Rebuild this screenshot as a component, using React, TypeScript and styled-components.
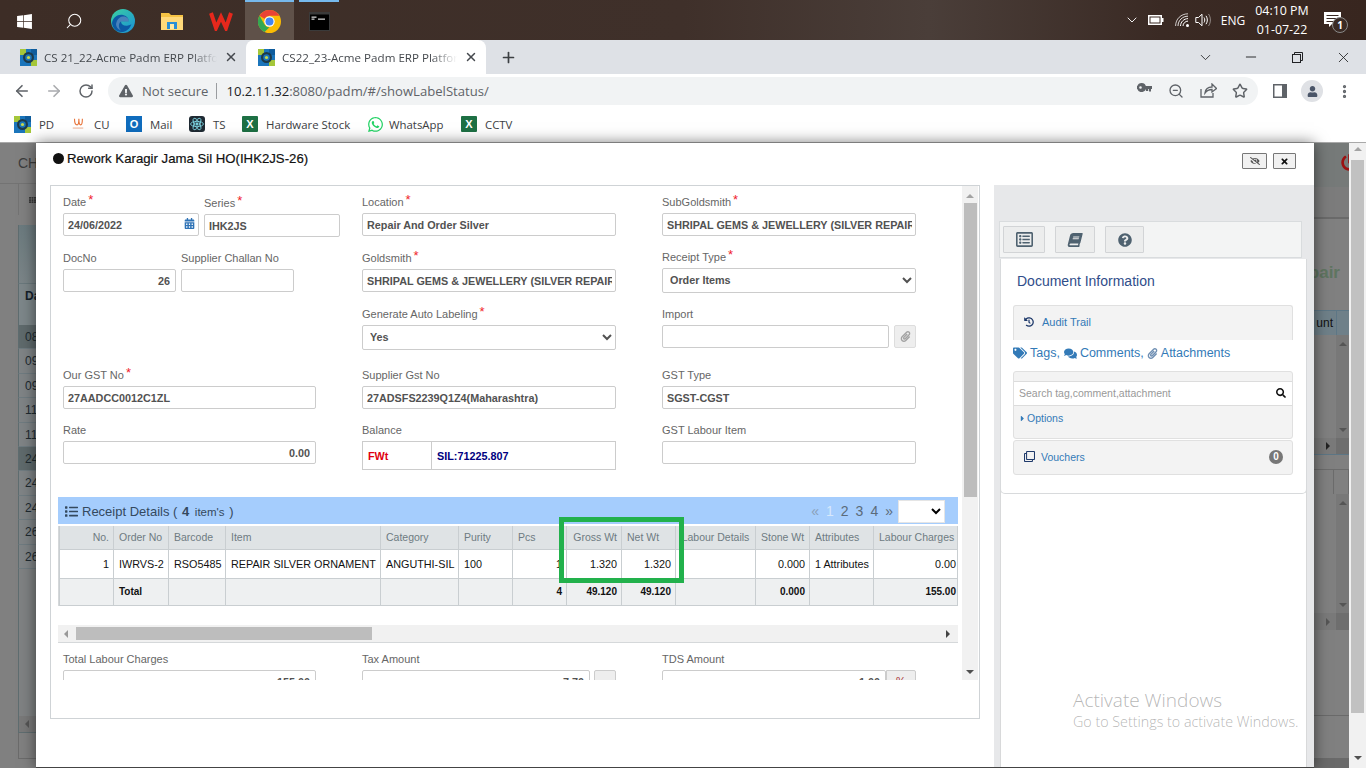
import React from "react";
import styled, { createGlobalStyle } from "styled-components";
import {
  ArrowLeft,
  ArrowRight,
  RotateCw,
  Search as SearchIcon,
  ZoomOut,
  Star,
  EllipsisVertical,
  X,
  Plus,
  ChevronDown,
  Minus,
} from "lucide-react";
import {
  FaWindows,
  FaUser,
  FaExclamationTriangle,
  FaCalendarAlt,
  FaPaperclip,
  FaList,
  FaRegListAlt,
  FaBook,
  FaQuestionCircle,
  FaHistory,
  FaTags,
  FaComments,
  FaSearch,
  FaCaretRight,
  FaEyeSlash,
  FaTimes,
  FaPowerOff,
  FaWhatsapp,
  FaRegClone,
  FaTh,
} from "react-icons/fa";

const GlobalStyle = createGlobalStyle`
  html, body {
    margin: 0;
    padding: 0;
    overflow: hidden;
    background: #808080;
  }
  * { box-sizing: border-box; }
`;

const UI_FONT = `"Open Sans", "Noto Sans", sans-serif`;
const WEB_FONT = `"Liberation Sans", Arial, sans-serif`;

const Screen = styled.div`
  width: 1366px;
  height: 768px;
  display: flex;
  flex-direction: column;
  overflow: hidden;
  font-family: ${WEB_FONT};
  position: relative;
`;

/* ---------- windows taskbar ---------- */

const Taskbar = styled.div`
  height: 40px;
  flex: none;
  display: flex;
  align-items: stretch;
  background: linear-gradient(90deg, #3d2d26 0%, #3f302a 50%, #4a3e39 68%, #3a2a24 85%, #38261f 100%);
  color: #fff;
  font-family: ${UI_FONT};
`;

const TaskCell = styled.div<{ $active?: boolean }>`
  width: 49px;
  display: flex;
  align-items: center;
  justify-content: center;
  background: ${(p) => (p.$active ? "#5f5149" : "transparent")};
  border-top: 2px solid ${(p) => (p.$active ? "#76b9ed" : "transparent")};
`;

const TaskCellOpen = styled(TaskCell)`
  width: 40px;
  margin-left: 5px;
  border-top-color: #76b9ed;
`;

const Tray = styled.div`
  margin-left: auto;
  display: flex;
  align-items: center;
  padding-right: 17px;
`;

const TrayIcon = styled.div<{ $w: number }>`
  width: ${(p) => p.$w}px;
  display: flex;
  align-items: center;
  justify-content: center;
`;

const TrayLang = styled.div`
  width: 38px;
  margin-left: 1px;
  font-size: 12px;
  text-align: center;
`;

const Clock = styled.div`
  width: 60px;
  text-align: center;
  font-size: 12.4px;
  line-height: 19px;
`;

const Notify = styled.div`
  width: 34px;
  margin-left: 3px;
  position: relative;
  display: flex;
  justify-content: center;
`;

const NotifyBadge = styled.span`
  position: absolute;
  left: 17px;
  top: 5px;
  width: 16px;
  height: 16px;
  border-radius: 50%;
  background: #3a2a24;
  border: 1px solid #8a8a8a;
  font-size: 10px;
  line-height: 14px;
  font-weight: 700;
  text-align: center;
`;

/* ---------- chrome ---------- */

const TabStrip = styled.div`
  height: 34px;
  flex: none;
  background: #dee1e6;
  display: flex;
  align-items: flex-end;
  padding-left: 8px;
  font-family: ${UI_FONT};
`;

const Tab = styled.div<{ $active?: boolean }>`
  width: ${(p) => (p.$active ? 240 : 238)}px;
  height: 34px;
  display: flex;
  align-items: center;
  padding: 0 8px 0 12px;
  gap: 7px;
  border-radius: 8px 8px 0 0;
  background: ${(p) => (p.$active ? "#fff" : "transparent")};
  color: #45494e;
  font-size: 11.6px;
`;

const TabTitle = styled.span`
  flex: 1;
  white-space: nowrap;
  overflow: hidden;
  -webkit-mask-image: linear-gradient(90deg, #000 85%, transparent 100%);
  mask-image: linear-gradient(90deg, #000 85%, transparent 100%);
`;

const NewTab = styled.div`
  width: 28px;
  height: 34px;
  margin-left: 8px;
  display: flex;
  align-items: center;
  justify-content: center;
  color: #3c4043;
`;

const WindowControls = styled.div`
  margin-left: auto;
  height: 34px;
  display: flex;
  align-items: center;
  color: #202124;
`;

const WindowButton = styled.div`
  width: 46px;
  display: flex;
  justify-content: center;
`;

const Toolbar = styled.div`
  height: 34px;
  flex: none;
  background: #fff;
  display: flex;
  align-items: center;
  font-family: ${UI_FONT};
  padding-left: 6px;
`;

const NavButton = styled.div<{ $dim?: boolean }>`
  width: 32px;
  display: flex;
  justify-content: center;
  color: ${(p) => (p.$dim ? "#a9abae" : "#5f6368")};
`;

const Omnibox = styled.div`
  width: 1150px;
  height: 28px;
  margin-left: 6px;
  border-radius: 14px;
  background: #f1f3f4;
  display: flex;
  align-items: center;
  padding-left: 11px;
  font-size: 13.1px;
  color: #5f6368;
`;

const NotSecure = styled.span`
  margin-left: 9px;
  padding-right: 8px;
  border-right: 1px solid #9a9da0;
  line-height: 16px;
`;

const Url = styled.span`
  margin-left: 9px;
  color: #5f6368;
  b {
    font-weight: 400;
    color: #202124;
  }
`;

const OmniActions = styled.div`
  margin-left: auto;
  padding-right: 2px;
  display: flex;
  color: #5f6368;
`;

const OmniAction = styled.div`
  width: 32px;
  display: flex;
  justify-content: center;
`;

const ToolEnd = styled.div`
  margin-left: 6px;
  display: flex;
  align-items: center;
  color: #5f6368;
`;

const ToolEndItem = styled.div`
  width: 32px;
  display: flex;
  justify-content: center;
`;

const Avatar = styled.div`
  width: 22px;
  height: 22px;
  border-radius: 50%;
  background: #dfe1e5;
  color: #4a5568;
  display: flex;
  align-items: center;
  justify-content: center;
`;

const Bookmarks = styled.div`
  height: 35px;
  flex: none;
  background: #fff;
  border-bottom: 1px solid #a9a9a9;
  display: flex;
  align-items: center;
  padding: 0 0 2px 14px;
  font-family: ${UI_FONT};
  font-size: 11.4px;
  color: #3c4043;
`;

const Bookmark = styled.div<{ $w: number; $gap?: number }>`
  width: ${(p) => p.$w}px;
  display: flex;
  align-items: center;
  gap: ${(p) => p.$gap ?? 8}px;
`;

const ExcelMark = styled.span`
  width: 16px;
  height: 16px;
  background: #1d7044;
  color: #fff;
  font-size: 11px;
  font-weight: 700;
  line-height: 16px;
  text-align: center;
  font-family: ${WEB_FONT};
  border-radius: 1px;
`;

const OutlookMark = styled.span`
  width: 16px;
  height: 16px;
  background: #0f6cbd;
  color: #fff;
  font-size: 11px;
  font-weight: 700;
  line-height: 16px;
  text-align: center;
  font-family: ${WEB_FONT};
`;

const ReactMark = styled.span`
  width: 16px;
  height: 16px;
  background: #1f2a33;
  border-radius: 3px;
  display: flex;
  align-items: center;
  justify-content: center;
`;

/* ---------- dimmed page behind the modal ---------- */

const PageArea = styled.div`
  flex: 1;
  position: relative;
  display: flex;
  min-height: 0;
  background: #808080;
`;

const BackPage = styled.div`
  width: 1349px;
  display: flex;
  justify-content: space-between;
  overflow: hidden;
`;

const BackLeft = styled.div`
  width: 36px;
  display: flex;
  flex-direction: column;
  color: #333;
`;

const BackHead = styled.div`
  height: 41px;
  flex: none;
  padding-left: 18px;
  line-height: 40px;
  font-size: 14px;
  color: #3c3c3c;
  border-bottom: 1px solid #737373;
  white-space: nowrap;
  overflow: hidden;
`;

const BackTools = styled.div`
  height: 31px;
  flex: none;
  margin-left: 18px;
  padding-left: 10px;
  border-left: 1px solid #737373;
  display: flex;
  align-items: center;
  color: #3a3a3a;
`;

const BackPanel = styled.div`
  margin: 10px 0 0 18px;
  flex: 1;
  display: flex;
  flex-direction: column;
`;

const BackPanelHead = styled.div`
  height: 58px;
  flex: none;
  background: linear-gradient(#6b7a7e, #7b8588);
  border-left: 1px solid #5f6d70;
`;

const BackHeadCell = styled.div`
  height: 42px;
  flex: none;
  padding: 5px 0 0 6px;
  background: #7d878a;
  border-left: 1px solid #5f6d70;
  border-top: 1px solid #6a787c;
  font-size: 12px;
  font-weight: 700;
  color: #14202a;
`;

const BackRow = styled.div<{ $dark?: boolean }>`
  height: 24.4px;
  flex: none;
  padding-left: 6px;
  line-height: 24px;
  font-size: 12px;
  overflow: hidden;
  background: ${(p) => (p.$dark ? "#5f6a6c" : "#7f8486")};
  color: #1e2a30;
  border-left: 1px solid #5f6d70;
  border-bottom: 1px solid #6f7b80;
`;

const BackFill = styled.div`
  flex: 1;
  border-left: 1px solid #5f6d70;
  background: #7f8283;
`;

const BackHScroll = styled.div`
  height: 17px;
  flex: none;
  background: #797979;
  border-left: 1px solid #5f6d70;
  border-bottom: 1px solid #5f6d70;
  display: flex;
  align-items: center;
  padding-left: 6px;
`;

const BackFoot = styled.div`
  height: 26px;
  flex: none;
  border-left: 1px solid #6b6b6b;
  border-bottom: 1px solid #6b6b6b;
  margin-bottom: 9px;
`;

const BackRight = styled.div`
  width: 35px;
  display: flex;
  flex-direction: column;
`;

const BackRightHead = styled.div`
  height: 44px;
  flex: none;
  display: flex;
  justify-content: flex-end;
  padding-top: 11px;
  overflow: hidden;
  background: #767a79;
`;

const BackRightBar = styled.div`
  height: 32px;
  flex: none;
  background: #7c7c7c;
  border-bottom: 2px solid #6a6a6a;
`;

const BackTitle = styled.div`
  height: 91px;
  flex: none;
  display: flex;
  justify-content: flex-end;
  padding-right: 9px;
  padding-top: 42px;
  font-size: 17px;
  font-weight: 700;
  line-height: 24px;
  color: #5f7561;
`;

const BackTableHead = styled.div`
  height: 25px;
  flex: none;
  display: flex;
  background: #6f8089;
  border-top: 1px solid #5d7685;
  font-size: 12px;
  color: #111;
`;

const BackThA = styled.div`
  width: 23px;
  padding-right: 3px;
  text-align: right;
  line-height: 24px;
  border-right: 1px solid #5d7685;
  overflow: hidden;
`;

const BackInnerBody = styled.div<{ $h: number }>`
  height: ${(p) => p.$h}px;
  flex: none;
  display: flex;
  justify-content: flex-end;
`;

const BackInnerBar = styled.div`
  width: 13px;
  background: #787878;
  display: flex;
  flex-direction: column;
  justify-content: space-between;
  align-items: center;
  padding: 7px 0 6px;
`;

const BackInnerFoot = styled.div<{ $line?: boolean }>`
  height: 17px;
  flex: none;
  display: flex;
  align-items: center;
  background: #7a7a7a;
  border-bottom: ${(p) => (p.$line ? "1px solid #5d7685" : "none")};
`;

const BackFootEnd = styled.div`
  margin-left: auto;
  width: 13px;
  height: 100%;
  background: #6e6e6e;
`;

const BackFootArrow = styled.div`
  margin-left: 12px;
`;

const BackGap = styled.div<{ $h: number }>`
  height: ${(p) => p.$h}px;
  flex: none;
`;

const BackGridRow = styled.div<{ $h: number }>`
  height: ${(p) => p.$h}px;
  flex: none;
  display: flex;
  border-top: 1px solid #6c6c6c;
`;

const BackGridCell = styled.div<{ $w: number }>`
  width: ${(p) => p.$w}px;
  border-right: 1px solid #6c6c6c;
`;

const BackEnd = styled.div`
  flex: 1;
  border-top: 1px solid #6a6a6a;
  display: flex;
  flex-direction: column;
  justify-content: flex-end;
`;

const BackEndBar = styled.div`
  height: 10px;
  background: #6a6a6a;
`;

const Arrow = styled.span<{ $dir: "up" | "down" | "left" | "right"; $c?: string; $s?: number }>`
  display: block;
  width: 0;
  height: 0;
  flex: none;
  ${(p) => {
    const c = p.$c ?? "#505050";
    const s = p.$s ?? 4;
    if (p.$dir === "up") return `border-left:${s}px solid transparent;border-right:${s}px solid transparent;border-bottom:${s}px solid ${c};`;
    if (p.$dir === "down") return `border-left:${s}px solid transparent;border-right:${s}px solid transparent;border-top:${s}px solid ${c};`;
    if (p.$dir === "left") return `border-top:${s}px solid transparent;border-bottom:${s}px solid transparent;border-right:${s}px solid ${c};`;
    return `border-top:${s}px solid transparent;border-bottom:${s}px solid transparent;border-left:${s}px solid ${c};`;
  }}
`;

const PageScroll = styled.div`
  width: 17px;
  background: #f1f1f1;
  display: flex;
  flex-direction: column;
  align-items: center;
  padding: 4px 0 8px;
`;

const PageThumb = styled.div`
  width: 13px;
  height: 553px;
  margin: 9px 0 auto;
  background: #c1c1c1;
`;

/* ---------- modal ---------- */

const Modal = styled.div`
  position: absolute;
  left: 36px;
  top: 0;
  bottom: 0;
  width: 1278px;
  background: #fff;
  box-shadow: 0 0 14px rgba(0, 0, 0, 0.55);
  border-bottom: 1px solid #444;
  display: flex;
  flex-direction: column;
`;

const ModalHead = styled.div`
  height: 42px;
  flex: none;
  display: flex;
  align-items: flex-start;
  padding: 7px 18px 0 17px;
`;

const ModalTitle = styled.div`
  display: flex;
  align-items: center;
  height: 16px;
  gap: 3px;
  font-size: 13.2px;
  -webkit-text-stroke: 0.2px #111;
  color: #111;
`;

const TitleDot = styled.span`
  width: 11px;
  height: 11px;
  border-radius: 50%;
  background: #111;
`;

const ModalButtons = styled.div`
  margin-left: auto;
  display: flex;
  gap: 6px;
  padding-top: 3px;
`;

const ModalButton = styled.div<{ $w: number }>`
  width: ${(p) => p.$w}px;
  height: 16px;
  background: #f1f1f1;
  border: 1px solid #777;
  border-radius: 1px;
  display: flex;
  align-items: center;
  justify-content: center;
  color: #111;
`;

const ModalBody = styled.div`
  flex: 1;
  min-height: 0;
  display: flex;
  padding-left: 14px;
  gap: 14px;
`;

const FormPanel = styled.div`
  width: 930px;
  height: 534px;
  border: 1px solid #cfd3d6;
`;

const FormViewport = styled.div`
  height: 494px;
  display: flex;
  overflow: hidden;
`;

const FormContent = styled.div`
  flex: 1;
  min-width: 0;
  padding: 8px 0 0 12px;
  overflow: hidden;
`;

const FormScrollBar = styled.div`
  width: 16px;
  margin-right: 1px;
  background: #f1f1f1;
  display: flex;
  flex-direction: column;
  align-items: center;
  padding: 8px 0 6px;
`;

const FormThumb = styled.div`
  width: 13px;
  height: 294px;
  margin: 5px 0 auto;
  background: #bdbdbd;
`;

const FormRow = styled.div<{ $h: number }>`
  height: ${(p) => p.$h}px;
  display: grid;
  grid-template-columns: 253px 254px 254px;
  column-gap: 46px;
`;

const PairCell = styled.div`
  display: flex;
  gap: 5px;
`;

const Field = styled.div<{ $w?: number; $nudge?: number }>`
  ${(p) => (p.$w ? `width: ${p.$w}px; flex: none;` : "")}
  ${(p) => (p.$nudge ? `margin-top: ${p.$nudge}px;` : "")}
`;

const Label = styled.div`
  height: 19px;
  line-height: 16px;
  font-size: 11px;
  color: #666;
  white-space: nowrap;
`;

const Req = styled.span`
  color: #f01e2c;
  font-size: 13px;
  line-height: 10px;
  margin-left: 2px;
  position: relative;
  top: -2px;
`;

const InputBox = styled.input<{ $right?: boolean }>`
  display: block;
  width: 100%;
  height: 23px;
  border: 1px solid #ccc;
  border-radius: 2px;
  background: #fff;
  padding: 0 ${(p) => (p.$right ? 5 : 3)}px 0 4px;
  font-family: ${WEB_FONT};
  font-size: 10.8px;
  font-weight: 700;
  color: #525252;
  text-align: ${(p) => (p.$right ? "right" : "left")};
  outline: none;
`;

const SelectBox = styled.select`
  display: block;
  width: 100%;
  height: 25px;
  border: 1px solid #ccc;
  border-radius: 2px;
  background: #fff;
  padding: 0 0 1px 3px;
  font-family: ${WEB_FONT};
  font-size: 10.8px;
  font-weight: 700;
  color: #525252;
  outline: none;
`;

const InputWrap = styled.div`
  position: relative;
  display: flex;
  gap: 4px;
`;

const CalIcon = styled.span`
  position: absolute;
  right: 4px;
  top: 5px;
  color: #2f73b6;
  display: flex;
`;

const AttachButton = styled.div`
  width: 22px;
  height: 23px;
  flex: none;
  margin-left: 1px;
  background: #eee;
  border: 1px solid #ddd;
  border-radius: 2px;
  color: #a3a3a3;
  display: flex;
  align-items: center;
  justify-content: center;
`;

const AddonButton = styled.div`
  width: 22px;
  height: 23px;
  flex: none;
  background: #eee;
  border: 1px solid #ccc;
  border-radius: 2px;
`;

const PercentButton = styled.div`
  width: 30px;
  height: 23px;
  flex: none;
  margin-left: -4px;
  background: #eee;
  border: 1px solid #ccc;
  border-radius: 0 2px 2px 0;
  color: #a33;
  font-size: 11px;
  text-align: center;
  line-height: 21px;
`;

const BalanceBox = styled.div`
  height: 29px;
  display: flex;
  border: 1px solid #ccc;
  font-size: 10.8px;
  font-weight: 700;
  line-height: 28px;
`;

const BalanceKey = styled.div`
  width: 69px;
  padding-left: 5px;
  border-right: 1px solid #ccc;
  color: #e0000f;
`;

const BalanceValue = styled.div`
  padding-left: 5px;
  color: #000080;
`;

/* receipt grid */

const GridSection = styled.div`
  margin: 27px 0 0 -5px;
  width: 900px;
  position: relative;
`;

const GridHead = styled.div`
  height: 27px;
  background: #a5cdfd;
  display: flex;
  align-items: center;
  padding: 1px 0 0 7px;
  color: #34495e;
  font-size: 13px;
`;

const GridHeadTitle = styled.span`
  margin-left: 4px;
  b {
    font-size: 13px;
    margin: 0 1px;
  }
  small {
    font-size: 11.5px;
    margin: 0 1px;
  }
`;

const Pager = styled.div`
  margin-left: auto;
  padding-right: 13px;
  display: flex;
  align-items: center;
  font-size: 14px;
  color: #5b6b7a;
`;

const PagerNum = styled.span<{ $on?: boolean; $dim?: boolean }>`
  margin-right: 7px;
  color: ${(p) => (p.$on ? "#d7e8fc" : p.$dim ? "#8aa0b8" : "#5b6b7a")};
`;

const PagerSelect = styled.select`
  width: 47px;
  height: 23px;
  margin-left: -2px;
  background: #fff;
  border: 1px solid #e5e5e5;
  outline: none;
`;

const GridScroll = styled.div`
  margin-top: 2px;
  overflow: hidden;
  height: 80px;
  border-left: 1px solid #d5d8da;
`;

const GridTable = styled.table`
  table-layout: fixed;
  border-collapse: collapse;
  width: 898px;
  font-size: 10.5px;
`;

const Th = styled.th`
  height: 23px;
  background: #dfe3e5;
  border: 1px solid #c9ced1;
  border-top: none;
  padding: 0 0 0 5px;
  font-weight: 400;
  color: #6e7b82;
  text-align: left;
  white-space: nowrap;
  overflow: hidden;
`;

const ThNum = styled(Th)`
  text-align: right;
  padding: 0 4px 0 0;
`;

const ThMid = styled(Th)`
  text-align: center;
  padding: 0;
`;

const Td = styled.td<{ $right?: boolean }>`
  height: 29px;
  border: 1px solid #c9ced1;
  padding: 0 ${(p) => (p.$right ? "4px" : "0")} 0 ${(p) => (p.$right ? "0" : "5px")};
  font-size: 10.8px;
  color: #111;
  text-align: ${(p) => (p.$right ? "right" : "left")};
  white-space: nowrap;
  overflow: hidden;
  background: #fff;
  &:last-child {
    padding-right: 1px;
  }
`;

const TotalTd = styled(Td)`
  height: 27px;
  background: #eef0f1;
  font-weight: 700;
  font-size: 10px;
`;

const GridBlank = styled.div`
  height: 19px;
`;

const HScroll = styled.div`
  height: 18px;
  width: 900px;
  background: #f1f1f1;
  border-bottom: 1px solid #d5d8da;
  display: flex;
  align-items: center;
  padding: 0 8px 0 6px;
`;

const HThumb = styled.div`
  width: 296px;
  height: 13px;
  margin: 0 auto 0 8px;
  background: #bdbdbd;
`;

const Highlight = styled.div`
  position: absolute;
  left: 501px;
  top: 20px;
  width: 125px;
  height: 66px;
  border: 5px solid #22b14c;
  pointer-events: none;
`;

const BottomRow = styled(FormRow)`
  margin-top: 8px;
`;

/* right side panel */

const SidePanel = styled.div`
  width: 320px;
  height: 100%;
  background: #e7e8ea;
  padding: 36px 7px 0 5px;
  display: flex;
  flex-direction: column;
`;

const SideTools = styled.div`
  width: 303px;
  height: 37px;
  flex: none;
  background: #f3f4f4;
  border: 1px solid #d9dcde;
  padding: 4px 3px;
  display: flex;
  gap: 10px;
`;

const SideTool = styled.div<{ $w: number }>`
  width: ${(p) => p.$w}px;
  height: 27px;
  background: #eceded;
  border: 1px solid #d2d4d6;
  border-radius: 1px;
  color: #4f6270;
  display: flex;
  align-items: center;
  justify-content: center;
`;

const SlantedIcon = styled.span`
  display: flex;
  transform: skewX(-14deg);
`;

const SideBody = styled.div`
  flex: 1;
  margin: 1px 0 0 1px;
  background: #fff;
  border-left: 1px solid #d8d9da;
  border-right: 1px solid #d8d9da;
`;

const InfoCard = styled.div`
  height: 235px;
  border: 1px solid #d8dadc;
  border-top: none;
  border-radius: 0 0 5px 5px;
  padding: 14px 13px 0 12px;
  margin: 0 -1px;
`;

const InfoTitle = styled.div`
  padding-left: 4px;
  height: 32px;
  font-size: 14px;
  line-height: 17px;
  color: #2f4d8a;
`;

const AuditBox = styled.div`
  height: 35px;
  background: #f3f3f3;
  border: 1px solid #e0e0e0;
  border-bottom: none;
  border-radius: 3px 3px 0 0;
  display: flex;
  align-items: center;
  padding: 0 0 2px 10px;
  gap: 8px;
  font-size: 11px;
  color: #337ab7;
`;

const AuditIcon = styled.span`
  display: flex;
  color: #1f3a6b;
`;

const TagsLine = styled.div`
  height: 26px;
  margin-bottom: 5px;
  display: flex;
  align-items: center;
  gap: 2px;
  font-size: 12.5px;
  color: #337ab7;
`;

const TagPart = styled.span<{ $gap?: number }>`
  display: inline-flex;
  align-items: center;
  gap: 3px;
  margin-left: ${(p) => p.$gap ?? 0}px;
`;

const SearchBox = styled.div`
  height: 68px;
  background: #f3f3f3;
  border: 1px solid #e0e0e0;
  border-radius: 3px;
  padding-top: 9px;
`;

const SearchRow = styled.div`
  height: 25px;
  background: #fff;
  border-top: 1px solid #dcdcdc;
  border-bottom: 1px solid #dcdcdc;
  display: flex;
  align-items: center;
  padding: 0 6px 2px 5px;
  color: #111;
`;

const SearchInput = styled.input`
  flex: 1;
  border: none;
  outline: none;
  min-width: 0;
  padding: 0;
  font-family: ${WEB_FONT};
  font-size: 10.5px;
  background: transparent;
  &::placeholder {
    color: #999;
    opacity: 1;
  }
`;

const OptionsLink = styled.div`
  display: flex;
  align-items: center;
  gap: 0;
  padding: 6px 0 0 4px;
  font-size: 10.5px;
  color: #337ab7;
`;

const VoucherBox = styled.div`
  height: 35px;
  margin-top: 1px;
  background: #f3f3f3;
  border: 1px solid #e0e0e0;
  border-radius: 3px;
  display: flex;
  align-items: center;
  padding: 0 9px 2px 10px;
  gap: 6px;
  font-size: 10.5px;
  color: #337ab7;
`;

const VoucherIcon = styled.span`
  display: flex;
  color: #1f3a6b;
`;

const Badge = styled.span`
  margin-left: auto;
  width: 14px;
  height: 14px;
  border-radius: 50%;
  background: #777;
  color: #fff;
  font-size: 10px;
  font-weight: 700;
  line-height: 14px;
  text-align: center;
`;

const Watermark = styled.div`
  position: absolute;
  left: 1073px;
  top: 687px;
  font-family: ${UI_FONT};
  font-weight: 300;
  color: rgba(120, 120, 120, 0.55);
  pointer-events: none;
  white-space: nowrap;
`;

const WatermarkTitle = styled.div`
  font-size: 19px;
  line-height: 26px;
`;

const WatermarkSub = styled.div`
  font-size: 14.3px;
  line-height: 18px;
`;

/* ---------- drawn logos ---------- */

const PadmIcon = () => (
  <svg width="17" height="17" viewBox="0 0 17 17">
    <rect width="17" height="17" fill="#1b75bb" />
    <rect width="6" height="6" fill="#a5c73a" />
    <rect x="11" y="11" width="6" height="6" fill="#a5c73a" />
    <rect x="11" width="6" height="6" fill="#0f5c9c" />
    <circle cx="8.5" cy="8.5" r="4.4" fill="none" stroke="#1d3a4a" strokeWidth="2.2" />
    <circle cx="8.5" cy="8.5" r="1.6" fill="#c7d94a" />
  </svg>
);

const EdgeIcon = () => (
  <svg width="24" height="24" viewBox="0 0 24 24">
    <defs>
      <linearGradient id="edgeA" x1="0" y1="0" x2="1" y2="1">
        <stop offset="0" stopColor="#3bd0a0" />
        <stop offset="1" stopColor="#1a8fd8" />
      </linearGradient>
    </defs>
    <circle cx="12" cy="12" r="12" fill="url(#edgeA)" />
    <path d="M1 14c1-6 6-9 11-8 4 .8 6 3.6 5.6 6.5H10c0 3 3 4.8 7 4 1.4-.3 2.6-.8 3.4-1.3-1.4 4.6-5.6 8-10.4 7.8C5 22.8 1.5 19 1 14z" fill="#0c59a4" />
    <path d="M10 12.5h7.6c.3-2.4-1.6-5-5-5-3 0-6 2-7 5.5C4 16 6 20 10 21.5 7 18.5 7.5 14 10 12.5z" fill="#fff" opacity=".25" />
  </svg>
);

const FolderIcon = () => (
  <svg width="22" height="20" viewBox="0 0 22 20">
    <path d="M0 2h8l2 2h12v15H0z" fill="#f6c344" />
    <rect y="6" width="22" height="13" fill="#ffd97a" />
    <rect x="6" y="11" width="10" height="7" fill="#2a8fd6" />
    <rect x="9" y="13" width="4" height="5" fill="#ffe9a8" />
  </svg>
);

const WpsIcon = () => (
  <svg width="24" height="20" viewBox="0 0 24 20">
    <polyline points="2,2 7,17 12,6 17,17 22,2" fill="none" stroke="#e5281c" strokeWidth="4" />
  </svg>
);

const ChromeIcon = () => (
  <svg width="23" height="23" viewBox="0 0 24 24">
    <circle cx="12" cy="12" r="12" fill="#fbbc04" />
    <path d="M12 0a12 12 0 0 1 10.39 6H12a6 6 0 0 0-5.2 3L1.6 6A12 12 0 0 1 12 0z" fill="#ea4335" />
    <path d="M1.61 6l5.19 9A6 6 0 0 0 12 18l-5.2 5A12 12 0 0 1 1.61 6z" fill="#34a853" />
    <circle cx="12" cy="12" r="5.4" fill="#fff" />
    <circle cx="12" cy="12" r="4.2" fill="#4285f4" />
  </svg>
);

const CmdIcon = () => (
  <svg width="21" height="19" viewBox="0 0 21 19">
    <rect width="21" height="19" fill="#3a3a3a" />
    <rect x="1" y="2.5" width="19" height="15.5" fill="#000" />
    <rect x="2.5" y="4.5" width="5" height="1.3" fill="#ccc" />
    <rect x="2.5" y="6.5" width="3" height="1.3" fill="#ccc" />
    <rect x="9" y="6.5" width="7" height="1.3" fill="#ccc" />
  </svg>
);

const BatteryIcon = () => (
  <svg width="16" height="10" viewBox="0 0 16 10">
    <rect x=".75" y=".75" width="12.5" height="8.5" fill="none" stroke="#fff" strokeWidth="1.5" />
    <rect x="2.5" y="2.5" width="9" height="5" fill="#fff" />
    <rect x="14" y="3" width="1.5" height="4" fill="#fff" />
  </svg>
);

const WifiIcon = () => (
  <svg width="15" height="14" viewBox="0 0 15 14" fill="none" stroke="#fff" strokeWidth="1">
    <path d="M.6 13C.6 6 6 .8 13 .8" opacity=".75" />
    <path d="M3 13C3 7.500 7.500 3.200 13 3.200" opacity=".85" />
    <path d="M5.500 13c0-4 3.500-7.400 7.500-7.400" />
    <path d="M8 13c0-2.600 2.400-4.900 5-4.900" />
    <circle cx="12.500" cy="12.500" r="1.500" fill="#fff" stroke="none" />
  </svg>
);

const VolumeIcon = () => (
  <svg width="17" height="14" viewBox="0 0 17 14" fill="none" stroke="#fff" strokeWidth="1">
    <path d="M.8 4.500h2.700L7 1.200v11.600L3.500 9.500H.8z" />
    <path d="M9 4.500c1 1.500 1 3.500 0 5" />
    <path d="M11 2.800c1.800 2.600 1.800 5.800 0 8.400" />
    <path d="M13.500 1c2.500 3.500 2.500 8.500 0 12" opacity=".45" />
  </svg>
);

const NotifyIcon = () => (
  <svg width="17" height="16" viewBox="0 0 17 16">
    <path d="M0 0h17v12H8l-3 3v-3H0z" fill="#fff" />
    <rect x="2.500" y="3" width="12" height="1" fill="#3a2a24" />
    <rect x="2.500" y="6" width="12" height="1" fill="#3a2a24" />
    <rect x="2.500" y="9" width="8" height="1" fill="#3a2a24" />
  </svg>
);

const KeyIcon = () => (
  <svg width="15" height="9" viewBox="0 0 15 9" fill="#5f6368">
    <path fillRule="evenodd" d="M4.500 0a4.500 4.500 0 1 1-4.200 6h-.3V3h.3A4.500 4.500 0 0 1 4.500 0zm-1 3.200a1.300 1.300 0 1 0 0 2.600 1.300 1.300 0 0 0 0-2.600z" />
    <path d="M8 3h7v3h-1v2.500h-2V6h-.8v2H9V6H8z" />
  </svg>
);

const CuIcon = () => (
  <svg width="14" height="14" viewBox="0 0 16 16">
    <path d="M4 2c0 5 1 7 3 7s2-3 2-7M9 2c0 5 1 7 2 7s2-3 2-7" fill="none" stroke="#e8743b" strokeWidth="1.3" />
    <rect x="2" y="12" width="12" height="1.300" fill="#f0b9a0" />
  </svg>
);

const AtomIcon = () => (
  <svg width="14" height="14" viewBox="0 0 24 24" fill="none" stroke="#7dd3e0" strokeWidth="1.5">
    <ellipse cx="12" cy="12" rx="11" ry="4.5" />
    <ellipse cx="12" cy="12" rx="11" ry="4.5" transform="rotate(60 12 12)" />
    <ellipse cx="12" cy="12" rx="11" ry="4.5" transform="rotate(120 12 12)" />
    <circle cx="12" cy="12" r="2" fill="#7dd3e0" />
  </svg>
);

const ShareIcon = () => (
  <svg width="17" height="15" viewBox="0 0 17 15" fill="none" stroke="#5f6368" strokeWidth="1.3">
    <path d="M1 6v8h12v-4" />
    <path d="M5 10c.5-4 3.5-6 7-6V1l4.500 4.500L12 9V6.500C9 6.500 6.500 8 5 10z" />
  </svg>
);

const PanelIcon = () => (
  <svg width="14" height="14" viewBox="0 0 14 14">
    <rect width="14" height="14" fill="#5f6368" />
    <rect x="1.5" y="1.5" width="7.5" height="11" fill="#fff" />
  </svg>
);

const RestoreIcon = () => (
  <svg width="11" height="11" viewBox="0 0 11 11" fill="none" stroke="#202124">
    <rect x=".5" y="2.5" width="8" height="8" />
    <path d="M2.500 2.500v-2h8v8h-2" />
  </svg>
);

/* ---------- data ---------- */

const GRID_COLS = [54, 55, 57, 155, 78, 54, 54, 55, 54, 80, 54, 64, 84];

const GRID_ROW = [
  { v: "1", right: true },
  { v: "IWRVS-2" },
  { v: "RSO5485" },
  { v: "REPAIR SILVER ORNAMENT" },
  { v: "ANGUTHI-SIL" },
  { v: "100" },
  { v: "1", right: true },
  { v: "1.320", right: true },
  { v: "1.320", right: true },
  { v: "" },
  { v: "0.000", right: true },
  { v: "1 Attributes" },
  { v: "0.00", right: true },
];

const TOTAL_ROW = [
  { v: "" },
  { v: "Total" },
  { v: "" },
  { v: "" },
  { v: "" },
  { v: "" },
  { v: "4", right: true },
  { v: "49.120", right: true },
  { v: "49.120", right: true },
  { v: "" },
  { v: "0.000", right: true },
  { v: "" },
  { v: "155.00", right: true },
];

const BACK_ROWS = [
  { t: "08", dark: true },
  { t: "09" },
  { t: "09" },
  { t: "11" },
  { t: "11" },
  { t: "24", dark: true },
  { t: "24" },
  { t: "24" },
  { t: "26" },
  { t: "26" },
];

const FieldInput = ({ label, req, value, right }: { label: string; req?: boolean; value?: string; right?: boolean }) => (
  <Field>
    <Label>
      {label}
      {req && <Req>*</Req>}
    </Label>
    <InputBox readOnly value={value ?? ""} $right={right} />
  </Field>
);

export default function App() {
  return (
    <Screen>
      <GlobalStyle />

      <Taskbar>
        <TaskCell>
          <FaWindows size={17} />
        </TaskCell>
        <TaskCell>
          <SearchIcon size={18} strokeWidth={1.4} style={{ transform: "scaleX(-1)" }} />
        </TaskCell>
        <TaskCell>
          <EdgeIcon />
        </TaskCell>
        <TaskCell>
          <FolderIcon />
        </TaskCell>
        <TaskCell>
          <WpsIcon />
        </TaskCell>
        <TaskCell $active>
          <ChromeIcon />
        </TaskCell>
        <TaskCellOpen>
          <CmdIcon />
        </TaskCellOpen>
        <Tray>
          <TrayIcon $w={18}>
            <ChevronDown size={16} strokeWidth={1.4} />
          </TrayIcon>
          <TrayIcon $w={30}>
            <BatteryIcon />
          </TrayIcon>
          <TrayIcon $w={22}>
            <WifiIcon />
          </TrayIcon>
          <TrayIcon $w={20}>
            <VolumeIcon />
          </TrayIcon>
          <TrayLang>ENG</TrayLang>
          <Clock>
            04:10 PM
            <br />
            01-07-22
          </Clock>
          <Notify>
            <TrayIcon $w={17}>
              <NotifyIcon />
            </TrayIcon>
            <NotifyBadge>1</NotifyBadge>
          </Notify>
        </Tray>
      </Taskbar>

      <TabStrip>
        <Tab>
          <PadmIcon />
          <TabTitle>CS 21_22-Acme Padm ERP Platform</TabTitle>
          <X size={14} strokeWidth={2.5} color="#45494e" />
        </Tab>
        <Tab $active>
          <PadmIcon />
          <TabTitle>CS22_23-Acme Padm ERP Platform</TabTitle>
          <X size={14} strokeWidth={2.5} color="#45494e" />
        </Tab>
        <NewTab>
          <Plus size={17} strokeWidth={2.4} />
        </NewTab>
        <WindowControls>
          <WindowButton>
            <ChevronDown size={17} strokeWidth={1.2} />
          </WindowButton>
          <WindowButton>
            <Minus size={16} strokeWidth={1.4} />
          </WindowButton>
          <WindowButton>
            <RestoreIcon />
          </WindowButton>
          <WindowButton>
            <X size={17} strokeWidth={1.2} />
          </WindowButton>
        </WindowControls>
      </TabStrip>

      <Toolbar>
        <NavButton>
          <ArrowLeft size={18} strokeWidth={2.2} />
        </NavButton>
        <NavButton $dim>
          <ArrowRight size={18} strokeWidth={2.2} />
        </NavButton>
        <NavButton>
          <RotateCw size={16} strokeWidth={2.2} />
        </NavButton>
        <Omnibox>
          <FaExclamationTriangle size={14} color="#5f6368" />
          <NotSecure>Not secure</NotSecure>
          <Url>
            <b>10.2.11.32</b>:8080/padm/#/showLabelStatus/
          </Url>
          <OmniActions>
            <OmniAction>
              <KeyIcon />
            </OmniAction>
            <OmniAction>
              <ZoomOut size={16} />
            </OmniAction>
            <OmniAction>
              <ShareIcon />
            </OmniAction>
            <OmniAction>
              <Star size={16} strokeWidth={2.2} />
            </OmniAction>
          </OmniActions>
        </Omnibox>
        <ToolEnd>
          <ToolEndItem>
            <PanelIcon />
          </ToolEndItem>
          <ToolEndItem>
            <Avatar>
              <FaUser size={11} />
            </Avatar>
          </ToolEndItem>
          <ToolEndItem>
            <EllipsisVertical size={17} strokeWidth={2.6} />
          </ToolEndItem>
        </ToolEnd>
      </Toolbar>

      <Bookmarks>
        <Bookmark $w={57}>
          <PadmIcon />
          PD
        </Bookmark>
        <Bookmark $w={55} $gap={9}>
          <CuIcon />
          CU
        </Bookmark>
        <Bookmark $w={63}>
          <OutlookMark>O</OutlookMark>
          Mail
        </Bookmark>
        <Bookmark $w={53}>
          <ReactMark>
            <AtomIcon />
          </ReactMark>
          TS
        </Bookmark>
        <Bookmark $w={125}>
          <ExcelMark>X</ExcelMark>
          Hardware Stock
        </Bookmark>
        <Bookmark $w={94} $gap={5}>
          <FaWhatsapp size={17} color="#25d366" />
          WhatsApp
        </Bookmark>
        <Bookmark $w={60}>
          <ExcelMark>X</ExcelMark>
          CCTV
        </Bookmark>
      </Bookmarks>

      <PageArea>
        <BackPage>
          <BackLeft>
            <BackHead>CH</BackHead>
            <BackTools>
              <FaTh size={10} />
            </BackTools>
            <BackPanel>
              <BackPanelHead />
              <BackHeadCell>Da</BackHeadCell>
              {BACK_ROWS.map((r, i) => (
                <BackRow key={i} $dark={r.dark}>
                  {r.t}
                </BackRow>
              ))}
              <BackFill />
              <BackHScroll>
                <Arrow $dir="left" $c="#555" />
              </BackHScroll>
              <BackFoot />
            </BackPanel>
          </BackLeft>
          <BackRight>
            <BackRightHead>
              <FaPowerOff size={17} color="#9c1111" style={{ marginRight: -9 }} />
            </BackRightHead>
            <BackRightBar />
            <BackTitle>pair</BackTitle>
            <BackTableHead>
              <BackThA>unt</BackThA>
            </BackTableHead>
            <BackInnerBody $h={103}>
              <BackInnerBar>
                <Arrow $dir="up" $c="#555" />
                <Arrow $dir="down" $c="#555" />
              </BackInnerBar>
            </BackInnerBody>
            <BackInnerFoot $line>
              <BackFootArrow>
                <Arrow $dir="right" $c="#222" />
              </BackFootArrow>
              <BackFootEnd />
            </BackInnerFoot>
            <BackGap $h={14} />
            <BackGridRow $h={25}>
              <BackGridCell $w={20} />
              <BackGridCell $w={15} />
            </BackGridRow>
            <BackInnerBody $h={119}>
              <BackInnerBar>
                <Arrow $dir="up" $c="#555" />
                <Arrow $dir="down" $c="#555" />
              </BackInnerBar>
            </BackInnerBody>
            <BackInnerFoot>
              <BackFootArrow>
                <Arrow $dir="right" $c="#555" />
              </BackFootArrow>
              <BackFootEnd />
            </BackInnerFoot>
            <BackGap $h={85} />
            <BackEnd>
              <BackEndBar />
            </BackEnd>
          </BackRight>
        </BackPage>
        <PageScroll>
          <Arrow $dir="up" $c="#a3a3a3" />
          <PageThumb />
          <Arrow $dir="down" $c="#505050" />
        </PageScroll>

        <Modal>
          <ModalHead>
            <ModalTitle>
              <TitleDot />
              Rework Karagir Jama Sil HO(IHK2JS-26)
            </ModalTitle>
            <ModalButtons>
              <ModalButton $w={25}>
                <FaEyeSlash size={10} color="#555" />
              </ModalButton>
              <ModalButton $w={23}>
                <FaTimes size={9} />
              </ModalButton>
            </ModalButtons>
          </ModalHead>
          <ModalBody>
            <FormPanel>
              <FormViewport>
                <FormContent>
                  <FormRow $h={56}>
                    <PairCell>
                      <Field $w={136}>
                        <Label>
                          Date
                          <Req>*</Req>
                        </Label>
                        <InputWrap>
                          <InputBox readOnly value="24/06/2022" />
                          <CalIcon>
                            <FaCalendarAlt size={11} />
                          </CalIcon>
                        </InputWrap>
                      </Field>
                      <Field $w={136} $nudge={1}>
                        <Label>
                          Series
                          <Req>*</Req>
                        </Label>
                        <InputBox readOnly value="IHK2JS" />
                      </Field>
                    </PairCell>
                    <FieldInput label="Location" req value="Repair And Order Silver" />
                    <FieldInput label="SubGoldsmith" req value="SHRIPAL GEMS & JEWELLERY (SILVER REPAIR)" />
                  </FormRow>
                  <FormRow $h={56}>
                    <PairCell>
                      <Field $w={113}>
                        <Label>DocNo</Label>
                        <InputBox readOnly value="26" $right />
                      </Field>
                      <Field $w={113}>
                        <Label>Supplier Challan No</Label>
                        <InputBox readOnly value="" />
                      </Field>
                    </PairCell>
                    <FieldInput label="Goldsmith" req value="SHRIPAL GEMS & JEWELLERY (SILVER REPAIR)" />
                    <Field $nudge={-1}>
                      <Label>
                        Receipt Type
                        <Req>*</Req>
                      </Label>
                      <SelectBox defaultValue="Order Items">
                        <option>Order Items</option>
                      </SelectBox>
                    </Field>
                  </FormRow>
                  <FormRow $h={61}>
                    <div />
                    <Field>
                      <Label>
                        Generate Auto Labeling
                        <Req>*</Req>
                      </Label>
                      <SelectBox defaultValue="Yes">
                        <option>Yes</option>
                      </SelectBox>
                    </Field>
                    <Field>
                      <Label>Import</Label>
                      <InputWrap>
                        <InputBox readOnly value="" />
                        <AttachButton>
                          <FaPaperclip size={11} />
                        </AttachButton>
                      </InputWrap>
                    </Field>
                  </FormRow>
                  <FormRow $h={55}>
                    <FieldInput label="Our GST No" req value="27AADCC0012C1ZL" />
                    <FieldInput label="Supplier Gst No" value="27ADSFS2239Q1Z4(Maharashtra)" />
                    <FieldInput label="GST Type" value="SGST-CGST" />
                  </FormRow>
                  <FormRow $h={48}>
                    <FieldInput label="Rate" value="0.00" right />
                    <Field>
                      <Label>Balance</Label>
                      <BalanceBox>
                        <BalanceKey>FWt</BalanceKey>
                        <BalanceValue>SIL:71225.807</BalanceValue>
                      </BalanceBox>
                    </Field>
                    <FieldInput label="GST Labour Item" />
                  </FormRow>

                  <GridSection>
                    <GridHead>
                      <FaList size={13} />
                      <GridHeadTitle>
                        Receipt Details ( <b>4</b> <small>item's</small> )
                      </GridHeadTitle>
                      <Pager>
                        <PagerNum $dim>«</PagerNum>
                        <PagerNum $on>1</PagerNum>
                        <PagerNum>2</PagerNum>
                        <PagerNum>3</PagerNum>
                        <PagerNum>4</PagerNum>
                        <PagerNum>»</PagerNum>
                        <PagerSelect />
                      </Pager>
                    </GridHead>
                    <GridScroll>
                      <GridTable>
                        <colgroup>
                          {GRID_COLS.map((w, i) => (
                            <col key={i} width={w} />
                          ))}
                        </colgroup>
                        <thead>
                          <tr>
                            <ThNum>No.</ThNum>
                            <Th>Order No</Th>
                            <Th>Barcode</Th>
                            <Th>Item</Th>
                            <Th>Category</Th>
                            <Th>Purity</Th>
                            <Th>Pcs</Th>
                            <ThNum>Gross Wt</ThNum>
                            <Th>Net Wt</Th>
                            <ThMid>Labour Details</ThMid>
                            <Th>Stone Wt</Th>
                            <Th>Attributes</Th>
                            <Th>Labour Charges</Th>
                          </tr>
                        </thead>
                        <tbody>
                          <tr>
                            {GRID_ROW.map((c, i) => (
                              <Td key={i} $right={c.right}>
                                {c.v}
                              </Td>
                            ))}
                          </tr>
                          <tr>
                            {TOTAL_ROW.map((c, i) => (
                              <TotalTd key={i} $right={c.right}>
                                {c.v}
                              </TotalTd>
                            ))}
                          </tr>
                        </tbody>
                      </GridTable>
                    </GridScroll>
                    <GridBlank />
                    <HScroll>
                      <Arrow $dir="left" $c="#999" />
                      <HThumb />
                      <Arrow $dir="right" $c="#444" />
                    </HScroll>
                    <Highlight />
                  </GridSection>

                  <BottomRow $h={40}>
                    <FieldInput label="Total Labour Charges" value="155.00" right />
                    <Field>
                      <Label>Tax Amount</Label>
                      <InputWrap>
                        <InputBox readOnly value="7.70" $right />
                        <AddonButton />
                      </InputWrap>
                    </Field>
                    <Field>
                      <Label>TDS Amount</Label>
                      <InputWrap>
                        <InputBox readOnly value="1.00" $right />
                        <PercentButton>%</PercentButton>
                      </InputWrap>
                    </Field>
                  </BottomRow>
                </FormContent>
                <FormScrollBar>
                  <Arrow $dir="up" $c="#a3a3a3" />
                  <FormThumb />
                  <Arrow $dir="down" $c="#505050" />
                </FormScrollBar>
              </FormViewport>
            </FormPanel>

            <SidePanel>
              <SideTools>
                <SideTool $w={42}>
                  <FaRegListAlt size={17} />
                </SideTool>
                <SideTool $w={40}>
                  <SlantedIcon>
                    <FaBook size={14} />
                  </SlantedIcon>
                </SideTool>
                <SideTool $w={39}>
                  <FaQuestionCircle size={14} />
                </SideTool>
              </SideTools>
              <SideBody>
                <InfoCard>
                  <InfoTitle>Document Information</InfoTitle>
                  <AuditBox>
                    <AuditIcon>
                      <FaHistory size={10} />
                    </AuditIcon>
                    Audit Trail
                  </AuditBox>
                  <TagsLine>
                    <TagPart>
                      <FaTags size={14} />
                      Tags,
                    </TagPart>
                    <TagPart $gap={2}>
                      <FaComments size={13} />
                      Comments,
                    </TagPart>
                    <TagPart $gap={1}>
                      <FaPaperclip size={11} color="#6f8fb3" />
                      Attachments
                    </TagPart>
                  </TagsLine>
                  <SearchBox>
                    <SearchRow>
                      <SearchInput readOnly placeholder="Search tag,comment,attachment" />
                      <FaSearch size={10} />
                    </SearchRow>
                    <OptionsLink>
                      <FaCaretRight size={9} />
                      Options
                    </OptionsLink>
                  </SearchBox>
                  <VoucherBox>
                    <VoucherIcon>
                      <FaRegClone size={11} />
                    </VoucherIcon>
                    Vouchers
                    <Badge>0</Badge>
                  </VoucherBox>
                </InfoCard>
              </SideBody>
            </SidePanel>
          </ModalBody>
        </Modal>
      </PageArea>

      <Watermark>
        <WatermarkTitle>Activate Windows</WatermarkTitle>
        <WatermarkSub>Go to Settings to activate Windows.</WatermarkSub>
      </Watermark>
    </Screen>
  );
}
